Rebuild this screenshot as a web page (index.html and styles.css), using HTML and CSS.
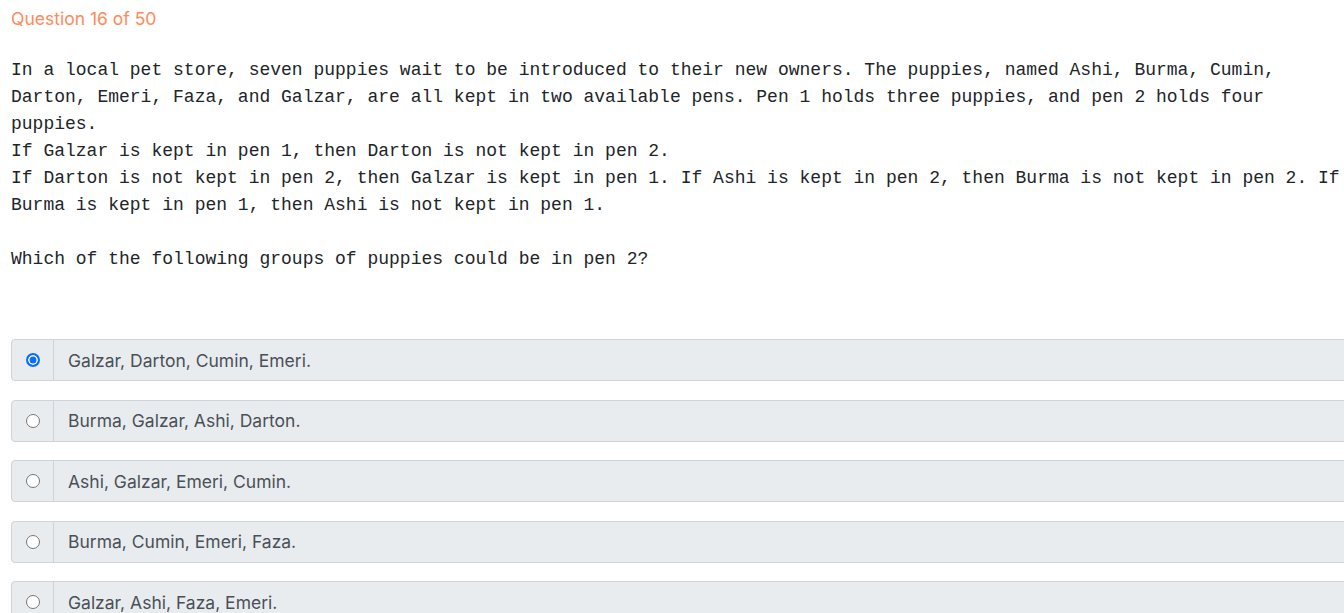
FILE: index.html
```html
<!DOCTYPE html>
<html>
<head>
<meta charset="utf-8">
<link rel="stylesheet" href="styles.css">
</head>
<body>
<div class="page">
  <div class="qnum">Question 16 of 50</div>
  <div class="qtext">In a local pet store, seven puppies wait to be introduced to their new owners. The puppies, named Ashi, Burma, Cumin, Darton, Emeri, Faza, and Galzar, are all kept in two available pens. Pen 1 holds three puppies, and pen 2 holds four puppies.
If Galzar is kept in pen 1, then Darton is not kept in pen 2.
If Darton is not kept in pen 2, then Galzar is kept in pen 1. If Ashi is kept in pen 2, then Burma is not kept in pen 2. If Burma is kept in pen 1, then Ashi is not kept in pen 1.

Which of the following groups of puppies could be in pen 2?</div>
  <div class="options">
    <label class="opt">
      <span class="opt-radio"><span class="radio checked"></span></span>
      <span class="opt-label">Galzar, Darton, Cumin, Emeri.</span>
    </label>
    <label class="opt">
      <span class="opt-radio"><span class="radio"></span></span>
      <span class="opt-label">Burma, Galzar, Ashi, Darton.</span>
    </label>
    <label class="opt">
      <span class="opt-radio"><span class="radio"></span></span>
      <span class="opt-label">Ashi, Galzar, Emeri, Cumin.</span>
    </label>
    <label class="opt">
      <span class="opt-radio"><span class="radio"></span></span>
      <span class="opt-label">Burma, Cumin, Emeri, Faza.</span>
    </label>
    <label class="opt">
      <span class="opt-radio"><span class="radio"></span></span>
      <span class="opt-label">Galzar, Ashi, Faza, Emeri.</span>
    </label>
  </div>
</div>
</body>
</html>
```
FILE: styles.css
```css
html, body {
  margin: 0;
  padding: 0;
  overflow: hidden;
  background: #fff;
}
.page {
  width: 1380px;
  padding: 8px 0 0 11px;
  box-sizing: border-box;
}
.qnum {
  font-family: Inter, "Noto Sans", sans-serif;
  font-size: 17.5px;
  line-height: 22px;
  color: #ff8a5c;
}
.qtext {
  margin-top: 27px;
  width: 1340px;
  font-family: "Liberation Mono", monospace;
  font-size: 18px;
  line-height: 27px;
  color: #212529;
  white-space: pre-wrap;
}
.options {
  margin-top: 66px;
  display: flex;
  flex-direction: column;
  gap: 18.5px;
}
.opt {
  display: flex;
  height: 42px;
  box-sizing: border-box;
  border: 1px solid #ced4da;
  border-radius: 4px;
  background: #e9ecef;
  width: 1380px;
}
.opt-radio {
  width: 41px;
  border-right: 1px solid #ced4da;
  display: flex;
  align-items: center;
  justify-content: center;
}
.radio {
  width: 14px;
  height: 14px;
  box-sizing: border-box;
  border-radius: 50%;
  border: 1px solid #767676;
  background: #fff;
}
.radio.checked {
  border: 2px solid #0b6ef7;
  background: #0b6ef7;
  box-shadow: inset 0 0 0 1.5px #fff;
}
.opt-label {
  display: flex;
  align-items: center;
  padding-left: 14px;
  font-family: Inter, "Noto Sans", sans-serif;
  font-size: 17.5px;
  color: #495057;
}
```
